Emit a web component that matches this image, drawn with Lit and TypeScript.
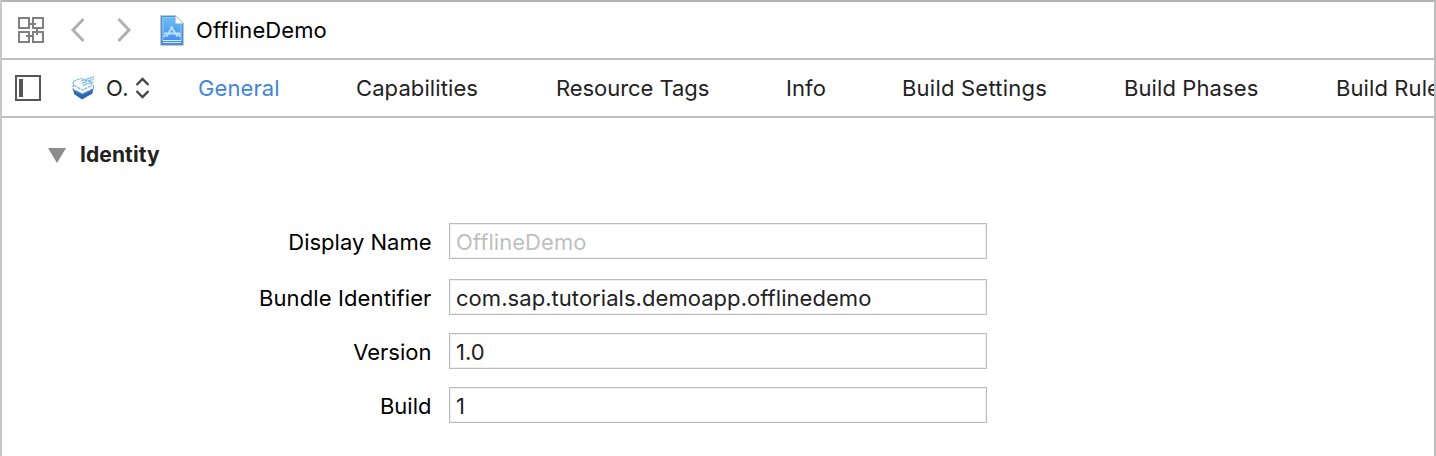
import { LitElement, html, css, svg } from "lit";
import { customElement } from "lit/decorators.js";

interface Field { label: string; value: string; placeholder?: boolean; cls: string; }

const tabs = [
  { label: "General", cls: "general" },
  { label: "Capabilities", cls: "capabilities" },
  { label: "Resource Tags", cls: "tags" },
  { label: "Info", cls: "info" },
  { label: "Build Settings", cls: "settings" },
  { label: "Build Phases", cls: "phases" },
  { label: "Build Rules", cls: "rules" },
];

const fields: Field[] = [
  { label: "Display Name", value: "OfflineDemo", placeholder: true, cls: "name" },
  { label: "Bundle Identifier", value: "com.sap.tutorials.demoapp.offlinedemo", cls: "bundle" },
  { label: "Version", value: "1.0", cls: "version" },
  { label: "Build", value: "1", cls: "build" },
];

const relatedIcon = svg`<g fill="none" stroke="#808080" stroke-width="2">
  <path d="M1 1h10v10H1zM15 1h10v10H15zM1 15h10v10H1zM15 15h10v10H15z"/>
  <path d="M12 7h6M19 11v7M8 19h6"/></g>`;

const projectIcon = svg`
  <defs><linearGradient id="page" x1="0" y1="0" x2="0" y2="1">
    <stop offset="0" stop-color="#6cc0f0"/><stop offset="1" stop-color="#3c86f2"/></linearGradient></defs>
  <path d="M.5 .5H16l7.500 7.500v22.500H.5z" fill="#e2e2de" stroke="#c3c5c5" stroke-width="1"/>
  <path d="M1.500 1.500H15.500V8h7v21.500h-21z" fill="url(#page)" stroke="#4a90da" stroke-width="1"/>
  <path d="M3 26V2.500h12M21 9v17" fill="none" stroke="#8ccaf6" stroke-width="1"/>
  <path d="M3 25.500h18M3 27.500h18" stroke="#d8edff" stroke-width="1"/>
  <path d="M15.500 1v7.500H23z" fill="#f6f6f5" stroke="#c5ccd0" stroke-width=".6"/>
  <path d="M12.500 11.500L6.500 21.500M11 11.500L17.500 21.500M4 18.500h16.500M5 20l-.7 2M19 19l.8 3" fill="none" stroke="#bfe2fc" stroke-width="1.900"/>`;

const targetIcon = svg`
  <path d="M1.500 14L10.500 18.500 21 13.500 20.500 17.500 10 23.500 2 18z" fill="#2d64b4"/>
  <path d="M1 10L4 8.500l7 5 8-5 2.500 1-.5 3.500-10.500 5L1 13.500z" fill="#fafdff" stroke="#5f9cd2" stroke-width="1.100" stroke-dasharray="3 1"/>
  <path d="M1 14l9.500 4.500L21.500 13" fill="none" stroke="#3f7cc2" stroke-width="1.200"/>
  <path d="M1 5.500l8-3L20 6.500l-1 3.500-8.500 4-9-5z" fill="#fbfdff" stroke="#74b0e0" stroke-width="1.100" stroke-dasharray="3 1"/>
  <path d="M9 5L22 .8M10 7.200L22 3M11 9.400L22 5.500" stroke="#7abdea" stroke-width="1.300" stroke-dasharray="5 .6"/>`;

@customElement("app-root")
export class AppRoot extends LitElement {
  static styles = css`
    :host { display: block; }
    * { box-sizing: border-box; }
    .pane { height: 456px; overflow: hidden; background: #fff; color: #000;
      border-left: 2px solid #c8c8c8; border-right: 2px solid #bebebe;
      font: 400 22px/24px Inter, "Noto Sans", sans-serif; white-space: nowrap; font-feature-settings: "calt" 0; }
    svg { display: block; flex: none; }
    .jump { height: 60px; border-top: 2px solid #b4b4b4; border-bottom: 2px solid #bebebe;
      display: flex; align-items: center; padding-left: 16px; }
    .back { margin-left: 26px; }
    .forward { margin-left: 30px; }
    .file { margin-left: 28px; }
    .title { margin-left: 12px; letter-spacing: .08px; }
    .bar { height: 58px; border-bottom: 2px solid #bebebe; display: flex; align-items: center;
      padding-left: 13px; color: #222; overflow: hidden; }
    .target { margin-left: 31px; }
    .short { flex: none; margin-left: 11px; width: 28px; letter-spacing: .5px; }
    .updown { margin-left: 1px; }
    .tabs { flex: none; display: flex; margin-left: 49px; letter-spacing: .1px; }
    .tab { flex: none; }
    .general { width: 158px; color: #3d87dc; }
    .capabilities { width: 200px; }
    .tags { width: 230px; letter-spacing: -.05px; }
    .info { width: 116px; }
    .settings { width: 222px; letter-spacing: .22px; }
    .phases { width: 212px; }
    .heading { display: flex; align-items: center; padding: 25px 0 0 46px; color: #222; }
    .heading b { font-weight: 700; margin-left: 14px; font-size: 21px; letter-spacing: .1px; }
    .form { padding-top: 56px; display: grid; row-gap: 18px; }
    .row { display: grid; grid-template-columns: 429.5px 538px; column-gap: 17.5px; height: 36px; }
    .row.name { margin-bottom: 2px; }
    .label { text-align: right; padding-top: 7px; }
    .bundle .label { letter-spacing: .12px; }
    .input { border: 1px solid #bcbcbc; box-shadow: inset 0 0 0 1px #f0f0f0; padding: 6px 0 0 6px; color: #222; letter-spacing: .05px; }
    .placeholder { color: #bfbfbf; }
  `;

  render() {
    return html`<div class="pane">
      <div class="jump">
        <svg width="26" height="26" viewBox="0 0 26 26">${relatedIcon}</svg>
        <svg class="back" width="16" height="26" viewBox="0 0 16 26"><path d="M13.500 2L3 13l10.500 11" fill="none" stroke="#b0b0b0" stroke-width="3"/></svg>
        <svg class="forward" width="16" height="26" viewBox="0 0 16 26"><path d="M2.500 2L13 13 2.500 24" fill="none" stroke="#b0b0b0" stroke-width="3"/></svg>
        <svg class="file" width="24" height="31" viewBox="0 0 24 31">${projectIcon}</svg>
        <span class="title">OfflineDemo</span>
      </div>
      <div class="bar">
        <svg width="26" height="26" viewBox="0 0 26 26"><path d="M1 1h24v24H1z" fill="none" stroke="#555" stroke-width="2"/><path d="M4 4h4v18H4z" fill="#555"/></svg>
        <svg class="target" width="23" height="25" viewBox="0 0 23 25">${targetIcon}</svg>
        <span class="short">O.</span>
        <svg class="updown" width="14" height="22" viewBox="0 0 14 22"><path d="M1.500 8L7.500 2l6 6M1.500 14l6 6 6-6" fill="none" stroke="#444" stroke-width="2.300"/></svg>
        <div class="tabs">${tabs.map((t) => html`<span class="tab ${t.cls}">${t.label}</span>`)}</div>
      </div>
      <div class="heading">
        <svg width="18" height="15" viewBox="0 0 18 15"><path d="M0 0h18L9 15z" fill="#8c8c8c"/></svg>
        <b>Identity</b>
      </div>
      <div class="form">${fields.map((f) => html`<div class="row ${f.cls}">
        <span class="label">${f.label}</span>
        <div class="input ${f.placeholder ? "placeholder" : ""}">${f.value}</div>
      </div>`)}</div>
    </div>`;
  }
}
